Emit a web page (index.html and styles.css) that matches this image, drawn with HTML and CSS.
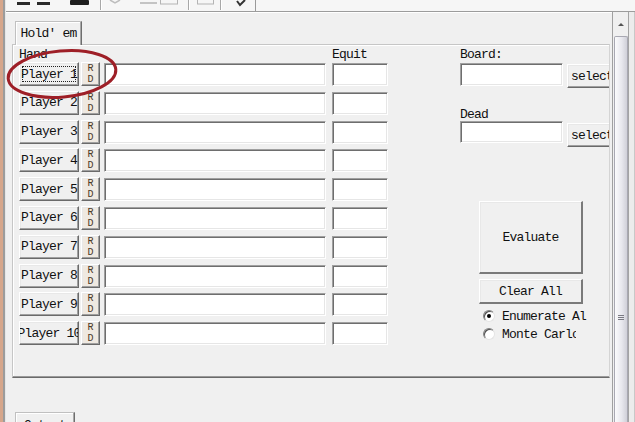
FILE: index.html
```html
<!DOCTYPE html>
<html>
<head>
<meta charset="utf-8">
<link rel="stylesheet" href="styles.css">
</head>
<body>
<div class="app">
  <div class="edge"></div>
  <div class="rest">
    <div class="toolbar">
      <svg width="629" height="11" viewBox="0 0 629 11">
        <rect x="11" y="2" width="13" height="3" fill="#2a2a2a"/>
        <rect x="31" y="2" width="13" height="3" fill="#2a2a2a"/>
        <rect x="64" y="0" width="19" height="5" rx="1" fill="#1e1e1e"/>
        <line x1="94.5" y1="0" x2="94.5" y2="10" stroke="#a8a8a8"/>
        <line x1="95.5" y1="0" x2="95.5" y2="10" stroke="#ffffff"/>
        <path d="M104 0 L109 3 L114 0" stroke="#bdbdbd" stroke-width="1.5" fill="none"/>
        <rect x="134" y="2" width="17" height="2" fill="#c4c4c4"/>
        <rect x="154.5" y="-2" width="17" height="6" fill="none" stroke="#b4b4b4"/>
        <line x1="182.5" y1="0" x2="182.5" y2="10" stroke="#a8a8a8"/>
        <line x1="183.5" y1="0" x2="183.5" y2="10" stroke="#ffffff"/>
        <rect x="191.5" y="-2" width="16" height="6" fill="none" stroke="#b4b4b4"/>
        <line x1="214.5" y1="0" x2="214.5" y2="10" stroke="#a8a8a8"/>
        <line x1="215.5" y1="0" x2="215.5" y2="10" stroke="#ffffff"/>
        <path d="M231 1 L234 5 L239 0" stroke="#333" stroke-width="2" fill="none"/>
        <line x1="249.5" y1="0" x2="249.5" y2="11" stroke="#9a9a9a"/>
      </svg>
    </div>
    <div class="main">
      <div class="content">
        <div class="tabs"><div class="tab">Hold' em</div></div>
        <div class="page">
          <div class="left">
            <div class="hdr"><span class="hand-lbl">Hand</span><span>Equit</span></div>
            <div class="rows">
              <div class="row"><div class="btn pbtn focus"><span>Player 1</span></div><div class="btn rd"><span>R</span><span>D</span></div><div class="inp hand-in"></div><div class="inp eq-in"></div></div>
              <div class="row"><div class="btn pbtn"><span>Player 2</span></div><div class="btn rd"><span>R</span><span>D</span></div><div class="inp hand-in"></div><div class="inp eq-in"></div></div>
              <div class="row"><div class="btn pbtn"><span>Player 3</span></div><div class="btn rd"><span>R</span><span>D</span></div><div class="inp hand-in"></div><div class="inp eq-in"></div></div>
              <div class="row"><div class="btn pbtn"><span>Player 4</span></div><div class="btn rd"><span>R</span><span>D</span></div><div class="inp hand-in"></div><div class="inp eq-in"></div></div>
              <div class="row"><div class="btn pbtn"><span>Player 5</span></div><div class="btn rd"><span>R</span><span>D</span></div><div class="inp hand-in"></div><div class="inp eq-in"></div></div>
              <div class="row"><div class="btn pbtn"><span>Player 6</span></div><div class="btn rd"><span>R</span><span>D</span></div><div class="inp hand-in"></div><div class="inp eq-in"></div></div>
              <div class="row"><div class="btn pbtn"><span>Player 7</span></div><div class="btn rd"><span>R</span><span>D</span></div><div class="inp hand-in"></div><div class="inp eq-in"></div></div>
              <div class="row"><div class="btn pbtn"><span>Player 8</span></div><div class="btn rd"><span>R</span><span>D</span></div><div class="inp hand-in"></div><div class="inp eq-in"></div></div>
              <div class="row"><div class="btn pbtn"><span>Player 9</span></div><div class="btn rd"><span>R</span><span>D</span></div><div class="inp hand-in"></div><div class="inp eq-in"></div></div>
              <div class="row"><div class="btn pbtn"><span>Player 10</span></div><div class="btn rd"><span>R</span><span>D</span></div><div class="inp hand-in"></div><div class="inp eq-in"></div></div>
            </div>
          </div>
          <div class="right">
            <div class="rlbl">Board:</div>
            <div class="pick"><div class="inp pick-in"></div><div class="btn sel">select</div></div>
            <div class="rlbl dead">Dead</div>
            <div class="pick"><div class="inp pick-in small"></div><div class="btn sel">select</div></div>
            <div class="btn eval">Evaluate</div>
            <div class="btn clear">Clear All</div>
            <div class="radios">
              <div class="radio"><span class="circ on"></span><span class="rlab">Enumerate All</span></div>
              <div class="radio"><span class="circ"></span><span class="rlab short">Monte Carlo</span></div>
            </div>
          </div>
        </div>
        <div class="tabs tabs2"><div class="tab out">Output</div></div>
      </div>
      <div class="vscroll">
        <div class="sb-line"></div>
        <div class="sb-track">
          <div class="sb-up"><span class="arrow"></span></div>
          <div class="sb-thumb"><span class="grip"></span></div>
        </div>
        <div class="sb-edge"></div>
      </div>
    </div>
  </div>
  <svg class="annot" width="140" height="110" viewBox="0 0 140 110">
    <ellipse cx="62" cy="74" rx="54" ry="23" transform="rotate(-5 62 74)" fill="none" stroke="#9e1f27" stroke-width="3"/>
  </svg>
</div>
</body>
</html>
```
FILE: styles.css
```css
* { box-sizing: border-box; }
html, body { margin: 0; padding: 0; }
body {
  width: 635px;
  height: 422px;
  overflow: hidden;
  background: #f0f0f0;
  font-family: "Liberation Mono", "DejaVu Sans Mono", monospace;
  font-size: 13px;
  line-height: 1;
  letter-spacing: -0.8px;
  color: #111;
}
.app {
  position: relative;
  width: 635px;
  height: 422px;
  overflow: hidden;
  display: flex;
}
.edge {
  width: 6px;
  flex: none;
  background: linear-gradient(to right, #d6a68b 0 3px, #9c9c9c 3px 5px, #e6e6e6 5px 6px);
}
.rest {
  flex: 1;
  display: flex;
  flex-direction: column;
  min-width: 0;
}
.toolbar {
  height: 12px;
  flex: none;
  background: #f6f6f6;
  border-bottom: 1px solid #9c9c9c;
}
.toolbar svg { display: block; }
.main {
  flex: 1;
  display: flex;
  min-height: 0;
}
.content {
  width: 606px;
  flex: none;
  overflow: hidden;
  padding-top: 9px;
  box-shadow: inset 0 1px #ffffff;
}
.tabs {
  display: flex;
  padding-left: 9px;
}
.tab {
  position: relative;
  z-index: 1;
  width: 67px;
  height: 24px;
  margin-bottom: -1px;
  background: #f0f0f0;
  border: 1px solid #c0c0c0;
  border-bottom: none;
  border-right: 1px solid #6e6e6e;
  box-shadow: inset -1px 0 #a8a8a8, inset 1px 1px #ffffff;
  display: flex;
  align-items: center;
  justify-content: center;
}
.page {
  margin-left: 6px;
  width: 598px;
  height: 334px;
  border-top: 1px solid #c6c6c6;
  border-left: 1px solid #c6c6c6;
  border-right: 1px solid #d4d4d4;
  border-bottom: 1px solid #6a6a6a;
  box-shadow: inset 0 -1px #9a9a9a, inset 1px 1px #ffffff;
  display: flex;
  padding-left: 6px;
  overflow: hidden;
}
.left {
  width: 369px;
  flex: none;
}
.hdr {
  height: 17px;
  display: flex;
  align-items: center;
  padding-top: 1px;
}
.hand-lbl { width: 313px; }
.rows {
  display: flex;
  flex-direction: column;
  gap: 4.8px;
}
.row {
  display: flex;
  height: 24px;
}
.btn {
  background: #f0f0f0;
  border: 1px solid;
  border-color: #ffffff #6a6a6a #6a6a6a #ffffff;
  box-shadow: inset -1px -1px #a0a0a0, inset 1px 1px #e8e8e8;
  display: flex;
  align-items: center;
  justify-content: center;
  white-space: nowrap;
  overflow: hidden;
  flex: none;
}
.pbtn {
  position: relative;
  width: 60px;
  height: 24px;
}
.pbtn.focus::after {
  content: "";
  position: absolute;
  left: 2px;
  top: 3px;
  right: 2px;
  bottom: 3px;
  border: 1px dotted #222;
}
.rd {
  width: 19px;
  height: 24px;
  margin-left: 2px;
  flex-direction: column;
  font-size: 10px;
  line-height: 11px;
  letter-spacing: 0;
  color: #4a3826;
  background: #efe9e1;
}
.inp {
  background: #ffffff;
  border-top: 1px solid #a0a0a0;
  border-left: 1px solid #a0a0a0;
  border-right: 1px solid #ffffff;
  border-bottom: 1px solid #ffffff;
  box-shadow: inset 1px 1px #6e6e6e, inset -1px -1px #e6e6e6;
  flex: none;
}
.hand-in {
  width: 222px;
  height: 23px;
  margin-left: 4px;
  margin-top: 1px;
}
.eq-in {
  width: 56px;
  height: 23px;
  margin-left: 6px;
  margin-top: 1px;
}
.right {
  margin-left: 72px;
  width: 170px;
  flex: none;
  display: flex;
  flex-direction: column;
}
.rlbl {
  height: 17px;
  display: flex;
  align-items: center;
  padding-top: 1px;
}
.rlbl.dead {
  height: 15px;
  margin-top: 18px;
}
.pick {
  display: flex;
  align-items: flex-start;
}
.pick-in {
  width: 103px;
  height: 23px;
  margin-top: 1px;
}
.pick-in.small { height: 22px; margin-top: 0; }
.sel {
  width: 50px;
  height: 24px;
  margin-left: 4px;
  margin-top: 2px;
}
.eval {
  width: 104px;
  height: 73px;
  margin-left: 19px;
  margin-top: 54px;
  border-width: 1px 2px 2px 1px;
  border-color: #ffffff #7a7a7a #7a7a7a #ffffff;
  box-shadow: inset 1px 1px #e8e8e8;
}
.clear {
  width: 104px;
  height: 25px;
  margin-left: 19px;
  margin-top: 5px;
  border-width: 1px 2px 2px 1px;
  border-color: #ffffff #7a7a7a #7a7a7a #ffffff;
  box-shadow: inset 1px 1px #e8e8e8;
}
.radios {
  margin-left: 23px;
  margin-top: 4px;
  display: flex;
  flex-direction: column;
  gap: 2px;
}
.radio {
  display: flex;
  align-items: center;
  height: 16px;
}
.circ {
  width: 12px;
  height: 12px;
  flex: none;
  border-radius: 50%;
  background: #ffffff;
  border: 1px solid;
  border-color: #808080 #e4e4e4 #e4e4e4 #808080;
  box-shadow: inset 1px 1px #505050;
  display: flex;
  align-items: center;
  justify-content: center;
}
.circ.on::after {
  content: "";
  width: 4px;
  height: 4px;
  border-radius: 50%;
  background: #000;
}
.rlab {
  margin-left: 7px;
  width: 85px;
  overflow: hidden;
  white-space: nowrap;
}
.rlab.short { width: 74px; }
.tabs2 { margin-top: 34px; }
.tab.out {
  width: 60px;
  align-items: flex-start;
  padding-top: 6px;
}
.vscroll {
  width: 23px;
  flex: none;
  display: flex;
}
.sb-line {
  width: 1px;
  background: #a0a0a0;
}
.sb-track {
  width: 14px;
  display: flex;
  flex-direction: column;
  margin-left: 1px;
}
.sb-up {
  height: 24px;
  display: flex;
  align-items: center;
  justify-content: center;
  flex: none;
}
.arrow {
  width: 0;
  height: 0;
  border-left: 3px solid transparent;
  border-right: 3px solid transparent;
  border-bottom: 3px solid #555;
}
.sb-thumb {
  flex: 1;
  background: linear-gradient(to right, #fbfbfc, #e8e8ee 55%, #d0d0d8);
  border: 1px solid #a8a8b2;
  border-bottom: none;
  border-radius: 2px 2px 0 0;
  display: flex;
  justify-content: center;
  padding-top: 278px;
}
.grip {
  width: 6px;
  height: 5px;
  background: repeating-linear-gradient(to bottom, #7a7a82 0 1px, transparent 1px 2px);
}
.sb-edge {
  flex: 1;
  background: #ececec;
  border-left: 1px solid #a4a4a4;
  border-right: 1px solid #c8c8c8;
}
.annot {
  position: absolute;
  left: 0;
  top: 0;
  pointer-events: none;
}
```
